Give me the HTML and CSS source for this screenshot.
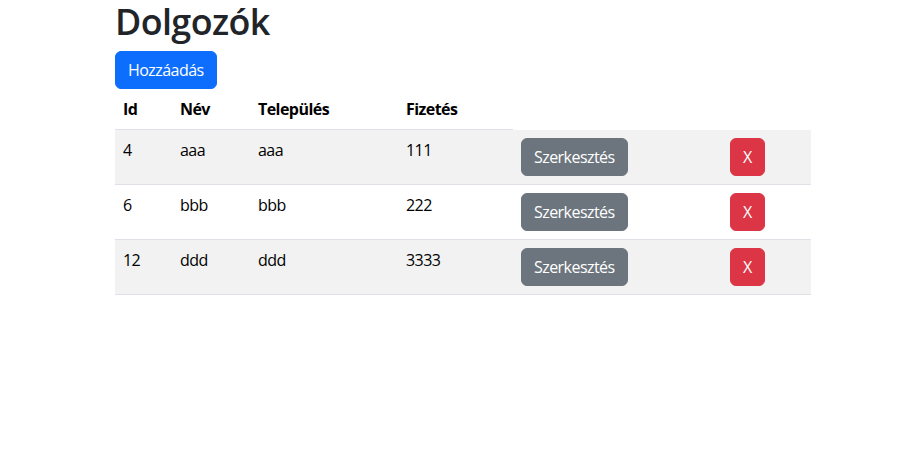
FILE: index.html
```html
<!DOCTYPE html>
<html lang="hu">
<head>
<meta charset="utf-8">
<title>Dolgozók</title>
<link rel="stylesheet" href="styles.css">
</head>
<body>
<div class="container">
  <h1 class="title">Dolgozók</h1>
  <button class="btn btn-primary">Hozzáadás</button>
  <table class="table">
    <colgroup>
      <col class="c-id"><col class="c-nev"><col class="c-tel"><col class="c-fiz"><col class="c-edit"><col class="c-del">
    </colgroup>
    <thead>
      <tr><th>Id</th><th>Név</th><th>Település</th><th>Fizetés</th></tr>
    </thead>
    <tbody>
      <tr class="odd"><td>4</td><td>aaa</td><td>aaa</td><td>111</td><td><button class="btn btn-secondary">Szerkesztés</button></td><td><button class="btn btn-danger">X</button></td></tr>
      <tr><td>6</td><td>bbb</td><td>bbb</td><td>222</td><td><button class="btn btn-secondary">Szerkesztés</button></td><td><button class="btn btn-danger">X</button></td></tr>
      <tr class="odd"><td>12</td><td>ddd</td><td>ddd</td><td>3333</td><td><button class="btn btn-secondary">Szerkesztés</button></td><td><button class="btn btn-danger">X</button></td></tr>
    </tbody>
  </table>
</div>
</body>
</html>
```
FILE: styles.css
```css
* { box-sizing: border-box; }
body {
  margin: 0;
  font-family: "Open Sans", "Noto Sans", sans-serif;
  font-size: 16px;
  line-height: 1.5;
  letter-spacing: -0.55px;
  color: #212529;
  background: #fff;
}
.container {
  width: 720px;
  margin: 0 auto;
  padding: 0 11px 0 13px;
}
.title {
  margin: 0 0 8px;
  font-size: 35.86px;
  font-weight: 600;
  line-height: 1.2;
  letter-spacing: -0.6px;
  color: #212529;
}
.btn {
  display: inline-block;
  font-family: inherit;
  font-size: 16px;
  line-height: 1.5;
  letter-spacing: -0.55px;
  padding: 6px 12px;
  border: 1px solid transparent;
  border-radius: 6px;
  color: #fff;
  cursor: pointer;
}
.btn-primary { background: #0d6efd; border-color: #0d6efd; }
.btn-secondary { background: #6c757d; border-color: #6c757d; }
.btn-danger { background: #dc3545; border-color: #dc3545; }
.table {
  width: 100%;
  table-layout: fixed;
  border-collapse: collapse;
  color: #000;
  margin: 0 0 16px;
}
.c-id { width: 57px; }
.c-nev { width: 78px; }
.c-tel { width: 148px; }
.c-fiz { width: 115px; }
.c-edit { width: 209px; }
.c-del { width: 89px; }
.table th, .table td {
  padding: 8px;
  text-align: left;
  vertical-align: top;
  border-bottom: 1px solid #dee2e6;
}
.table th { font-weight: 700; vertical-align: bottom; }
.table tr.odd td { background: #f2f2f2; }
```
